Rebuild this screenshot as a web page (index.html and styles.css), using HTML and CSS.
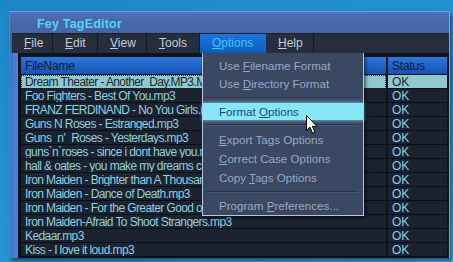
FILE: index.html
```html
<!DOCTYPE html>
<html lang="en">
<head>
  <meta charset="UTF-8">
  <title>Fey TagEditor</title>
  <link rel="stylesheet" href="styles.css">
</head>
<body>
  <div class="window">
    <div class="titlebar">Fey TagEditor</div>
    <div class="menubar">
      <div class="menu w-file"><u>F</u>ile</div>
      <div class="menu w-edit"><u>E</u>dit</div>
      <div class="menu w-view"><u>V</u>iew</div>
      <div class="menu w-tools"><u>T</u>ools</div>
      <div class="menu w-options open"><u>O</u>ptions
        <div class="dropdown">
          <div class="opt">Use <u>F</u>ilename Format</div>
          <div class="opt">Use <u>D</u>irectory Format</div>
          <div class="sep"></div>
          <div class="opt active">Format <u>O</u>ptions
            <svg class="pointer" width="13" height="20" viewBox="0 0 13 20">
              <path d="M0.5 0.5 L0.5 15.5 L4 12.2 L6.6 18.3 L9 17.3 L6.4 11.3 L11 11.3 Z" fill="#fff" stroke="#000" stroke-width="1" stroke-linejoin="round"/>
            </svg>
          </div>
          <div class="sep"></div>
          <div class="opt tall"><u>E</u>xport Tags Options</div>
          <div class="opt tall"><u>C</u>orrect Case Options</div>
          <div class="opt tall">Copy <u>T</u>ags Options</div>
          <div class="sep"></div>
          <div class="opt">Program <u>P</u>references...</div>
        </div>
      </div>
      <div class="menu w-help"><u>H</u>elp</div>
      <div class="menu-rest"></div>
    </div>
    <div class="content">
      <div class="frame-left"></div>
      <div class="list">
        <div class="row head">
          <div class="cell name">FileName</div>
          <div class="cell status">Status</div>
        </div>
        <div class="row selected">
          <div class="cell name">Dream Theater - Another&nbsp; Day.MP3.MP3</div>
          <div class="cell status">OK</div>
        </div>
        <div class="row"><div class="cell name">Foo Fighters - Best Of You.mp3</div><div class="cell status">OK</div></div>
        <div class="row"><div class="cell name">FRANZ FERDINAND - No You Girls.mp3</div><div class="cell status">OK</div></div>
        <div class="row"><div class="cell name">Guns N Roses - Estranged.mp3</div><div class="cell status">OK</div></div>
        <div class="row"><div class="cell name">Guns_n'_Roses - Yesterdays.mp3</div><div class="cell status">OK</div></div>
        <div class="row"><div class="cell name">guns`n`roses - since i dont have you.mp3</div><div class="cell status">OK</div></div>
        <div class="row"><div class="cell name">hall &amp; oates - you make my dreams come true.mp3</div><div class="cell status">OK</div></div>
        <div class="row"><div class="cell name">Iron Maiden - Brighter than A Thousand Suns.mp3</div><div class="cell status">OK</div></div>
        <div class="row"><div class="cell name">Iron Maiden - Dance of Death.mp3</div><div class="cell status">OK</div></div>
        <div class="row"><div class="cell name">Iron Maiden - For the Greater Good of God.mp3</div><div class="cell status">OK</div></div>
        <div class="row"><div class="cell name">Iron Maiden-Afraid To Shoot Strangers.mp3</div><div class="cell status">OK</div></div>
        <div class="row"><div class="cell name">Kedaar.mp3</div><div class="cell status">OK</div></div>
        <div class="row"><div class="cell name">Kiss - I love it loud.mp3</div><div class="cell status">OK</div></div>
      </div>
    </div>
  </div>
</body>
</html>
```

FILE: styles.css
```css
body {
  margin: 0;
  width: 453px;
  height: 262px;
  overflow: hidden;
  background: linear-gradient(160deg, #1d86c8 0%, #2596d2 60%, #3aa8df 100%);
  font-family: "Liberation Sans", Arial, sans-serif;
}
.window {
  margin: 11px 0 0 9px;
  width: 441px;
  height: 247px;
  box-sizing: border-box;
  background: #3f66aa;
  border-top: 1px solid #6f9ae0;
  border-left: 1px solid #4f82d0;
  border-right: 1px solid #8aa6d0;
  box-shadow: 2px 3px 4px rgba(20, 30, 50, 0.6);
  display: flex;
  flex-direction: column;
}
.titlebar {
  height: 21px;
  padding-left: 27px;
  background: linear-gradient(#4d73bc, #4868aa 40%, #4564a4);
  color: #55d3f4;
  font-weight: bold;
  font-size: 12.5px;
  line-height: 24px;
  letter-spacing: 0.2px;
}
.menubar {
  height: 20px;
  margin-left: 2px;
  display: flex;
  background: #272e3e;
  border-top: 1px solid #1a2030;
  box-sizing: border-box;
}
.menu {
  position: relative;
  box-sizing: border-box;
  padding-left: 12px;
  font-size: 12px;
  line-height: 19px;
  color: #c4ccda;
  border-right: 1px solid #141922;
}
.w-file { width: 41px; }
.w-edit { width: 45px; }
.w-view { width: 49px; }
.w-tools { width: 53px; }
.w-options { width: 66px; }
.w-help { width: 48px; }
.menu-rest {
  flex: 1;
}
.menu.open {
  background: linear-gradient(#1c74dc, #0f5cbc);
  color: #3cc6ff;
  border-right: none;
}
.dropdown {
  position: absolute;
  left: 2px;
  top: 19px;
  width: 162px;
  box-sizing: border-box;
  padding: 4px 0 0 0;
  background: #3b4862;
  border: 1px solid #b9c5d8;
  border-top: none;
  box-shadow: 2px 2px 3px rgba(0, 0, 0, 0.5);
  z-index: 5;
}
.opt {
  position: relative;
  height: 18px;
  padding-left: 16px;
  font-size: 11.6px;
  line-height: 18px;
  color: #98a7c0;
  white-space: nowrap;
}
.opt.tall {
  height: 19px;
  line-height: 19px;
}
.opt.active {
  height: 17px;
  line-height: 17px;
  background: #88e7f7;
  color: #18478a;
  box-shadow: 0 0 3px 1px rgba(136, 231, 247, 0.6);
}
.pointer {
  position: absolute;
  left: 103px;
  top: 12px;
}
.sep {
  height: 0;
  margin: 4px 5px 4px 4px;
  border-top: 1px solid #28324a;
  border-bottom: 1px solid #4a5670;
}
.content {
  flex: 1;
  display: flex;
}
.frame-left {
  width: 8px;
  background: linear-gradient(90deg, #3c74c2, #4a86d6);
}
.list {
  flex: 1;
  background: #0e131c;
  padding: 4px 2px 0 3px;
  display: flex;
  flex-direction: column;
}
.row {
  display: flex;
  gap: 2px;
  height: 14px;
}
.cell {
  box-sizing: border-box;
  border-bottom: 1px solid #0a0e15;
  background: #1b2331;
  color: #90cfdf;
  font-size: 12px;
  letter-spacing: -0.6px;
  line-height: 14px;
  white-space: nowrap;
  overflow: hidden;
}
.cell.name {
  width: 365px;
  padding-left: 4px;
}
.cell.status {
  width: 59px;
  padding-left: 4px;
  letter-spacing: 0;
}
.row.head {
  height: 18px;
}
.row.head .cell {
  background: linear-gradient(#2c78dc, #1552b4);
  color: #0d1a33;
  line-height: 18px;
  letter-spacing: -0.2px;
  border-bottom: 1px solid #0a0e15;
}
.row.selected .cell {
  background: #8ec9cf;
  color: #182833;
}
.row.selected .cell.name {
  outline: 1px dotted #1c3a30;
  outline-offset: -1px;
}
```
